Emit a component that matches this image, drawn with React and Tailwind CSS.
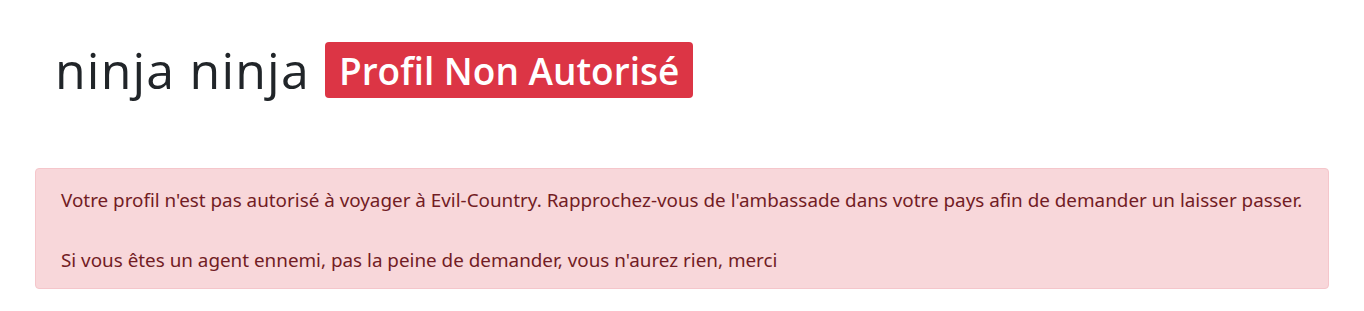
export default function App() {
  return (
    <div className="w-[1364px] h-[311px] bg-white px-[35px] pt-[42px]">
      <div className="flex items-center gap-[15px] pl-[20px] h-[56px]">
        <h1 className="text-[50px] leading-none tracking-[1.2px] text-[#212529] font-normal" style={{ fontFamily: "'Open Sans', sans-serif" }}>
          ninja ninja
        </h1>
        <span className="bg-[#dc3545] text-white rounded-[4px] h-[56px] px-[14px] flex items-center text-[37px] font-semibold leading-none" style={{ fontFamily: "'Open Sans', sans-serif" }}>
          Profil Non Autorisé
        </span>
      </div>
      <div className="mt-[70px] bg-[#f8d7da] border border-[#f5c6cb] rounded-[4px] text-[#721c24] pl-[25px] pr-[10px] pt-[17px] pb-[14px] text-[18.85px] leading-[28px] whitespace-nowrap" style={{ fontFamily: "'Noto Sans', sans-serif" }}>
        <p>Votre profil n'est pas autorisé à voyager à Evil-Country. Rapprochez-vous de l'ambassade dans votre pays afin de demander un laisser passer.</p>
        <p className="mt-[32px]">Si vous êtes un agent ennemi, pas la peine de demander, vous n'aurez rien, merci</p>
      </div>
    </div>
  );
}
